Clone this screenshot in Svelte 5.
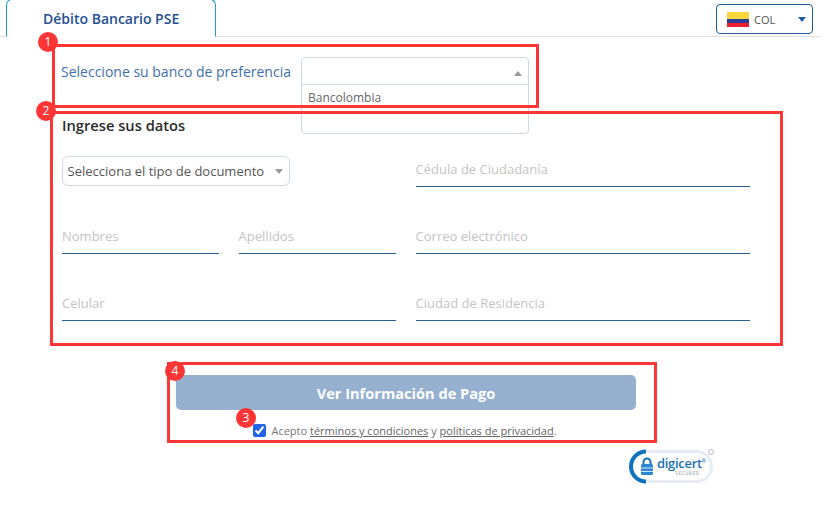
<script>
  let fields = [
    { label: 'Nombres', half: true },
    { label: 'Apellidos', half: true },
    { label: 'Correo electrónico' },
    { label: 'Celular' },
    { label: 'Ciudad de Residencia' },
  ];

  let marks = [
    { n: 1, cls: 'm1' },
    { n: 2, cls: 'm2' },
    { n: 3, cls: 'm3' },
    { n: 4, cls: 'm4' },
  ];
</script>

<div class="page">
  <header class="tabs">
    <div class="tab">Débito Bancario PSE</div>
    <div class="currency">
      <span class="flag"><i class="y"></i><i class="b"></i><i class="r"></i></span>
      <span class="code">COL</span>
      <span class="caret"></span>
    </div>
  </header>

  <section class="bank">
    <span class="bank-label">Seleccione su banco de preferencia</span>
    <div class="bank-select">
      <span class="up"></span>
      <div class="bank-list">Bancolombia</div>
    </div>
  </section>

  <section class="data">
    <h2>Ingrese sus datos</h2>
    <div class="grid">
      <div class="col">
        <div class="doc-select">
          <span>Selecciona el tipo de documento</span>
          <span class="down"></span>
        </div>
      </div>
      <div class="field"><span>Cédula de Ciudadanía</span></div>

      <div class="col pair">
        {#each fields.filter((f) => f.half) as f}
          <div class="field"><span>{f.label}</span></div>
        {/each}
      </div>
      <div class="field"><span>{fields[2].label}</span></div>
      <div class="field"><span>{fields[3].label}</span></div>
      <div class="field"><span>{fields[4].label}</span></div>
    </div>
  </section>

  <section class="submit">
    <button class="pay" disabled>Ver Información de Pago</button>
    <label class="terms">
      <input type="checkbox" checked />
      <span>Acepto <u>términos y condiciones</u> y <u>políticas de privacidad</u>.</span>
    </label>
  </section>

  <div class="seal">
    <svg width="86" height="38" viewBox="0 0 86 38">
      <rect x="3.500" y="4.500" width="80" height="30" rx="15" fill="#fff" stroke="#e6ecf1" stroke-width="3" />
      <path d="M18 4.500 A15 15 0 0 0 18 34.500" fill="none" stroke="#0f72bd" stroke-width="4" />
      <path d="M15.500 18 v-3 a3.500 3.500 0 0 1 7 0 v3" fill="none" stroke="#1a6fb5" stroke-width="2" />
      <rect x="13" y="17" width="12" height="11" rx="1.500" fill="#2a86d0" />
      <path d="M13 21h12M13 24.500h12" stroke="#fff" stroke-width="0.800" />
      <circle cx="83" cy="5" r="2.500" fill="#fff" stroke="#b9bdc0" stroke-width="1" />
    </svg>
    <span class="brand">digicert<sup>®</sup></span>
    <span class="secured">SECURED</span>
  </div>

  <div class="box b1"></div>
  <div class="box b2"></div>
  <div class="box b4"></div>
  {#each marks as m}
    <span class="mark {m.cls}">{m.n}</span>
  {/each}
</div>

<style>
  :global(body) {
    background: #fff;
  }

  .page {
    position: relative;
    width: 829px;
    height: 527px;
    overflow: hidden;
    font-family: "Open Sans", sans-serif;
    color: #555;
  }

  .tabs {
    width: 821px;
    height: 37px;
    box-sizing: border-box;
    display: flex;
    justify-content: space-between;
    padding: 0 8px 0 6px;
    border-bottom: 1px solid #dfdfdf;
  }

  .tab {
    width: 208px;
    height: 36px;
    border: 1px solid #1d9fc4;
    border-bottom: 1px solid #fff;
    border-radius: 6px 6px 0 0;
    margin-top: -1px;
    color: #1f4f92;
    font-size: 14px;
    font-weight: 600;
    line-height: 37px;
    text-indent: 36px;
  }

  .currency {
    width: 79px;
    height: 28px;
    margin-top: 4px;
    border: 1px solid #1f5a9a;
    border-radius: 4px;
    display: flex;
    align-items: center;
    padding: 0 6px 0 10px;
    font-size: 11px;
  }

  .flag {
    width: 22px;
    height: 15px;
    display: flex;
    flex-direction: column;
    margin-right: 5px;
  }

  .flag i {
    display: block;
  }

  .flag .y {
    height: 7px;
    background: #fbd63c;
  }

  .flag .b {
    height: 4px;
    background: #2b3a93;
  }

  .flag .r {
    height: 4px;
    background: #ee1c2e;
  }

  .code {
    flex: 1;
    color: #555;
  }

  .caret {
    border-left: 4px solid transparent;
    border-right: 4px solid transparent;
    border-top: 5px solid #1f5a9a;
  }

  .bank {
    display: flex;
    align-items: center;
    height: 28px;
    margin-top: 20px;
    padding-left: 61px;
  }

  .bank-label {
    width: 240px;
    color: #3f70ab;
    font-size: 14px;
  }

  .bank-select {
    position: relative;
    width: 226px;
    height: 27px;
    border: 1px solid #cddbe8;
    border-radius: 4px 4px 0 0;
  }

  .up {
    position: absolute;
    right: 6px;
    top: 13px;
    border-left: 4px solid transparent;
    border-right: 4px solid transparent;
    border-bottom: 5px solid #999;
  }

  .bank-list {
    position: absolute;
    left: -1px;
    top: 26px;
    width: 228px;
    height: 50px;
    padding-left: 6px;
    box-sizing: border-box;
    border: 1px solid #cddbe8;
    border-radius: 0 0 4px 4px;
    background: #fff;
    font-size: 12px;
    line-height: 26px;
    color: #666;
  }

  .data {
    padding: 0 0 0 62px;
  }

  h2 {
    margin: 0;
    padding-top: 30px;
    height: 21px;
    font-size: 14.700px;
    font-weight: 600;
    line-height: 20px;
    color: #2b2b2b;
  }

  .grid {
    display: grid;
    grid-template-columns: 334px 334.400px;
    column-gap: 19.600px;
    row-gap: 36px;
    margin-top: 20px;
  }

  .col {
    height: 31px;
  }

  .pair {
    display: grid;
    grid-template-columns: 157px 157.400px;
    column-gap: 19.600px;
  }

  .doc-select {
    width: 228px;
    height: 30px;
    box-sizing: border-box;
    border: 1px solid #cddbe8;
    border-radius: 6px;
    display: flex;
    align-items: center;
    justify-content: space-between;
    padding: 0 6px 0 4.600px;
    font-size: 13px;
    color: #555;
  }

  .down {
    border-left: 4px solid transparent;
    border-right: 4px solid transparent;
    border-top: 5px solid #999;
  }

  .field {
    height: 31px;
    box-sizing: border-box;
    border-bottom: 1px solid #2a6096;
    font-size: 13px;
    line-height: 26px;
    color: #c4c4c4;
  }

  .submit {
    margin-top: 54px;
    margin-left: 176px;
    width: 460px;
  }

  .pay {
    display: block;
    width: 460px;
    height: 35px;
    padding: 1px 0 0 0;
    border: 0;
    border-radius: 5px;
    background: #95b1cf;
    color: #fff;
    font-family: inherit;
    font-size: 14.600px;
    font-weight: 700;
  }

  .terms {
    display: flex;
    align-items: center;
    justify-content: center;
    margin-top: 13px;
    padding-right: 2px;
    height: 14px;
    font-size: 11px;
    color: #777;
  }

  .terms input {
    width: 13px;
    height: 13px;
    margin: 0 5px 0 0;
    accent-color: #2463eb;
  }

  .terms span {
    padding-top: 1px;
  }

  .terms u {
    color: #666;
  }

  .seal {
    position: absolute;
    left: 628px;
    top: 447px;
    width: 86px;
    height: 38px;
  }

  .brand {
    position: absolute;
    left: 29px;
    top: 10px;
    font-size: 13px;
    font-weight: 600;
    letter-spacing: -0.300px;
    line-height: 13px;
    color: #1a6fb5;
  }

  .brand sup {
    position: absolute;
    top: -2px;
    font-size: 5px;
  }

  .secured {
    position: absolute;
    left: 47px;
    top: 23px;
    font-family: "DejaVu Sans Mono", monospace;
    font-size: 5px;
    letter-spacing: 0.500px;
    line-height: 6px;
    color: #9aa4ad;
  }

  .box {
    position: absolute;
    box-sizing: border-box;
    border: 3px solid #fd3535;
  }

  .b1 {
    left: 52px;
    top: 44px;
    width: 487px;
    height: 64px;
  }

  .b2 {
    left: 50px;
    top: 111px;
    width: 733px;
    height: 235px;
  }

  .b4 {
    left: 167px;
    top: 362px;
    width: 490px;
    height: 81px;
  }

  .mark {
    position: absolute;
    width: 20px;
    height: 20px;
    border-radius: 50%;
    background: #fd3535;
    color: #fff;
    font-size: 12px;
    line-height: 20px;
    text-align: center;
  }

  .m1 {
    left: 38px;
    top: 32px;
  }

  .m2 {
    left: 36px;
    top: 101px;
  }

  .m3 {
    left: 236px;
    top: 408px;
  }

  .m4 {
    left: 165px;
    top: 361px;
  }
</style>
